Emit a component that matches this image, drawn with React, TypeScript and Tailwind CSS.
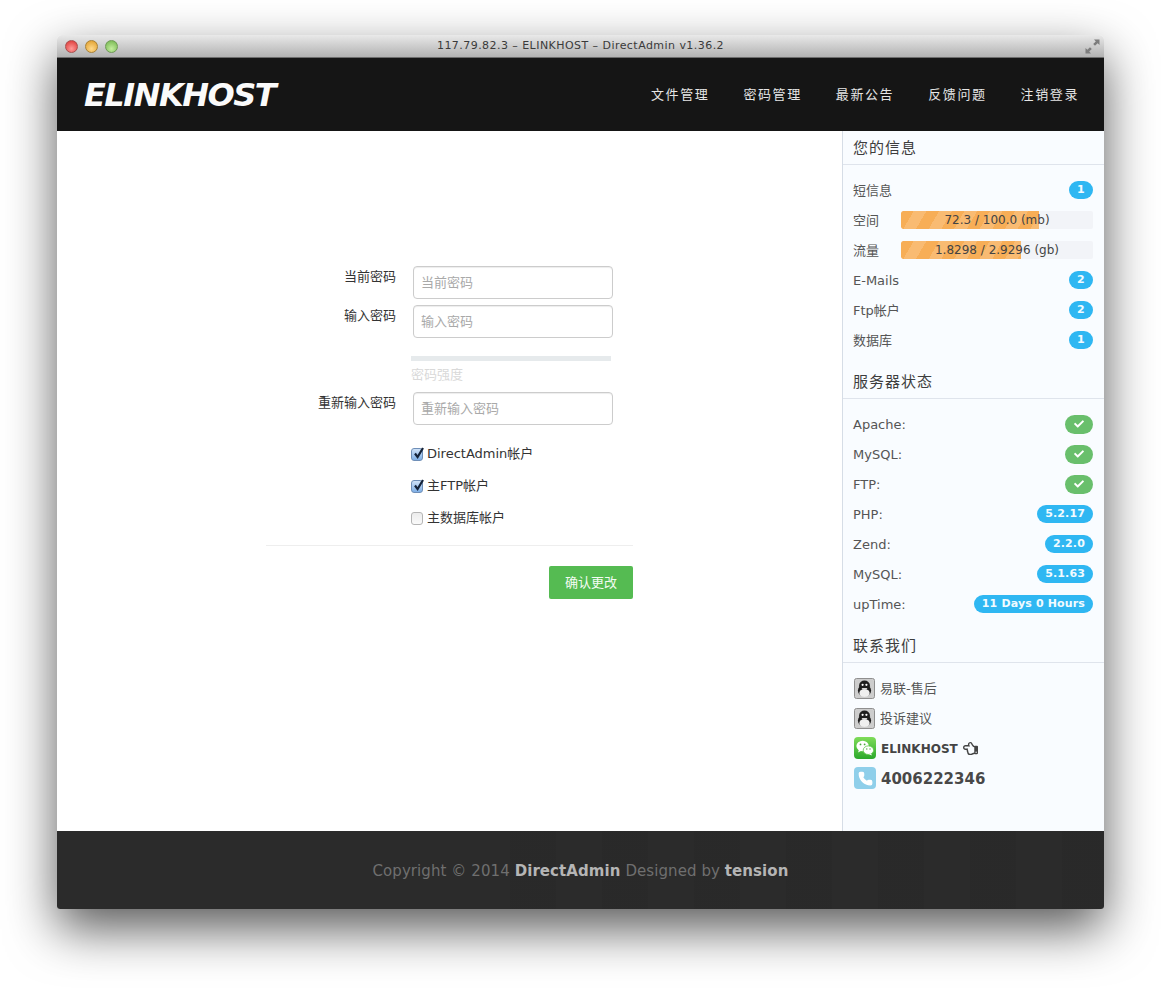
import { FaCheck, FaRegHandPointLeft } from 'react-icons/fa';
import { Phone } from 'lucide-react';

const cjk = "font-['DejaVu_Sans','Noto_Sans_CJK_SC',sans-serif]";

const navItems = ['文件管理', '密码管理', '最新公告', '反馈问题', '注销登录'];

const serverRows = [
  { label: 'Apache:', ok: true },
  { label: 'MySQL:', ok: true },
  { label: 'FTP:', ok: true },
  { label: 'PHP:', value: '5.2.17' },
  { label: 'Zend:', value: '2.2.0' },
  { label: 'MySQL:', value: '5.1.63' },
  { label: 'upTime:', value: '11 Days 0 Hours' },
];

function Badge({ children }: { children: React.ReactNode }) {
  return (
    <span className="flex h-[18px] min-w-6 items-center justify-center rounded-full bg-[#2fb7f2] px-[8px] text-[11px] font-bold tracking-[0.15px] text-[#f2fbff]">
      {children}
    </span>
  );
}

function CheckBadge() {
  return (
    <span className="flex h-[19px] w-7 items-center justify-center rounded-full bg-[#69bf6c] text-white">
      <FaCheck size={10} />
    </span>
  );
}

function Meter({ text, percent }: { text: string; percent: number }) {
  return (
    <div className="relative h-[18px] flex-1 overflow-hidden rounded-[2px] bg-[#f2f4f8]">
      <div
        className="h-full rounded-l-[2px] bg-[repeating-linear-gradient(120deg,#f7ae57_0px,#f7ae57_11px,#f9bb72_11px,#f9bb72_22px)]"
        style={{ width: `${percent}%` }}
      />
      <span className="absolute inset-0 flex items-center justify-center text-[12px] text-[#444]">
        {text}
      </span>
    </div>
  );
}

function Row({ children }: { children: React.ReactNode }) {
  return (
    <div className="flex h-[30px] items-center justify-between [&>span:first-child]:pt-[2px]">
      {children}
    </div>
  );
}

function SectionTitle({ children }: { children: React.ReactNode }) {
  return (
    <h3 className="flex h-[34px] items-center border-b border-[#dfe4ec] pl-[10px] pt-[1px] text-[15px] tracking-[1px] text-[#3d3d3d]">
      {children}
    </h3>
  );
}

function QQIcon() {
  return (
    <svg width="21" height="21" viewBox="0 0 21 21" className="ml-[1px] shrink-0">
      <rect x="0.5" y="0.5" width="20" height="20" rx="2" fill="#cdcdcd" stroke="#8f8f8f" />
      <ellipse cx="10.5" cy="12.5" rx="6.6" ry="6" fill="#1e1e1e" />
      <ellipse cx="10.5" cy="7.5" rx="5.4" ry="5" fill="#1e1e1e" />
      <ellipse cx="10.5" cy="15" rx="5.2" ry="4" fill="#efefef" />
      <circle cx="8.6" cy="6.8" r="1.1" fill="#fff" />
      <circle cx="12.4" cy="6.8" r="1.1" fill="#fff" />
      <path d="M7.5 10h6l-1.2 1.6H8.7z" fill="#d8d8d8" />
    </svg>
  );
}

function WechatIcon() {
  return (
    <svg width="22" height="22" viewBox="0 0 22 22" className="ml-[1px] shrink-0">
      <defs>
        <linearGradient id="wechat" x1="0" y1="0" x2="0" y2="1">
          <stop offset="0" stopColor="#7fdc5a" />
          <stop offset="1" stopColor="#2ba82b" />
        </linearGradient>
      </defs>
      <rect width="22" height="22" rx="4" fill="url(#wechat)" />
      <ellipse cx="8.6" cy="9" rx="6.2" ry="5.2" fill="#fff" />
      <path d="M5 12.5l-1 3 3.4-1.7z" fill="#fff" />
      <ellipse cx="14.4" cy="13.2" rx="5.2" ry="4.3" fill="#fff" stroke="#5cc648" strokeWidth="0.8" />
      <path d="M17 16.5l1 2-3-1.3z" fill="#fff" />
      <circle cx="6.5" cy="7.4" r="0.9" fill="#4aa83a" />
      <circle cx="10.6" cy="7.4" r="0.9" fill="#4aa83a" />
      <circle cx="12.8" cy="12" r="0.7" fill="#4aa83a" />
      <circle cx="16" cy="12" r="0.7" fill="#4aa83a" />
    </svg>
  );
}

function Checkbox({ checked }: { checked?: boolean }) {
  return (
    <span
      className={
        checked
          ? 'relative flex h-[13px] w-[12px] shrink-0 items-center justify-center rounded-[3px] border border-[#6f8fb8] bg-gradient-to-b from-[#cfe2f8] to-[#7fafe6]'
          : 'relative flex h-[13px] w-[12px] shrink-0 items-center justify-center rounded-[3px] border border-[#b5b5b5] bg-gradient-to-b from-[#ececec] to-[#fafafa]'
      }
    >
      {checked && (
        <svg width="14" height="14" viewBox="0 0 14 14" className="absolute -top-[3px] left-0">
          <path d="M3 7.5l2.6 3.6L11 2" fill="none" stroke="#14233a" strokeWidth="2.2" />
        </svg>
      )}
    </span>
  );
}

function Field({ label, className }: { label: string; className?: string }) {
  return (
    <div className={`flex items-start ${className ?? ''}`}>
      <label className="w-[130px] pt-[1px] text-right text-[13px] text-[#333]">{label}</label>
      <input
        placeholder={label}
        className="ml-[17px] h-[33px] w-[200px] rounded-[4px] border border-[#ccc] bg-white px-[7px] text-[13px] shadow-[inset_0_1px_1px_rgba(0,0,0,0.075)] outline-none placeholder:text-[#a9a9a9]"
      />
    </div>
  );
}

function CheckRow({ label, checked }: { label: string; checked?: boolean }) {
  return (
    <div className="flex h-[32px] items-center gap-[4px] pl-[145px] text-[13px] text-[#333]">
      <Checkbox checked={checked} />
      <span>{label}</span>
    </div>
  );
}

export default function App() {
  return (
    <div className={`h-[988px] overflow-hidden bg-white pl-[57px] pt-[35px] ${cjk}`}>
      <div className="w-[1047px] overflow-hidden rounded-t-[5px] rounded-b-[3px] shadow-[0_20px_50px_rgba(0,0,0,0.65)]">
        {/* title bar */}
        <div className="relative flex h-[23px] items-center justify-center border-b border-[#6d6d6d] bg-gradient-to-b from-[#e9e9e9] to-[#b2b2b2] text-[11px] tracking-[0.45px] text-[#3a3a3a]">
          <div className="absolute left-[8px] top-[5px] flex gap-[7px]">
            <span className="h-[13px] w-[13px] rounded-full border border-[#a8504f] bg-[radial-gradient(circle_at_50%_70%,#ff9a98,#d9312f)]" />
            <span className="h-[13px] w-[13px] rounded-full border border-[#a98236] bg-[radial-gradient(circle_at_50%_70%,#ffd98a,#dd9a26)]" />
            <span className="h-[13px] w-[13px] rounded-full border border-[#6f9a56] bg-[radial-gradient(circle_at_50%_70%,#c4ee9e,#6fb24a)]" />
          </div>
          <span>117.79.82.3 – ELINKHOST – DirectAdmin v1.36.2</span>
          <svg width="15" height="15" viewBox="0 0 15 15" className="absolute right-[4px] top-[4px]">
            <path d="M9 0.5h5.5V6L12.6 4.2 10 6.8 8.2 5l2.6-2.6zM6 14.5H0.5V9l1.9 1.8L5 8.2 6.8 10l-2.6 2.6z" fill="#7d7d7d" />
          </svg>
        </div>

        {/* header */}
        <header className="flex h-[73px] items-center justify-between bg-[#151515] pl-[27px] pr-[25px]">
          <span className="text-[32px] font-bold italic leading-none tracking-[-1.5px] text-[#fafafa]">
            ELINKHOST
          </span>
          <nav className="flex gap-[34px] text-[13px] tracking-[1.6px] text-[#e6e6e6]">
            {navItems.map((item) => (
              <span key={item}>{item}</span>
            ))}
          </nav>
        </header>

        <div className="flex h-[700px]">
          {/* form */}
          <main className="w-[785px] bg-white pl-[209px] pt-[135px]">
            <div className="w-[367px]">
              <Field label="当前密码" />
              <Field label="输入密码" className="mt-[6px]" />
              <div className="ml-[145px] mt-[18px] h-[5px] w-[200px] bg-[#e6eaec]" />
              <p className="ml-[145px] mt-[5px] text-[13px] leading-[18px] text-[#d9d9d9]">密码强度</p>
              <Field label="重新输入密码" className="mt-[8px]" />
              <div className="mt-[13px]">
                <CheckRow label="DirectAdmin帐户" checked />
                <CheckRow label="主FTP帐户" checked />
                <CheckRow label="主数据库帐户" />
              </div>
              <div className="mt-[11px] border-t border-[#eeeeee]" />
              <div className="mt-[20px] flex justify-end">
                <button className="h-[33px] w-[84px] rounded-[2px] bg-[#55bb52] text-[13px] text-[#f4fbf3]">
                  确认更改
                </button>
              </div>
            </div>
          </main>

          {/* sidebar */}
          <aside className="w-[262px] border-l border-[#d6dde6] bg-[#f9fcff] text-[13px] text-[#555]">
            <SectionTitle>您的信息</SectionTitle>
            <div className="pb-[10px] pl-[10px] pr-[11px] pt-[10px]">
              <Row>
                <span>短信息</span>
                <Badge>1</Badge>
              </Row>
              <Row>
                <span className="w-[48px]">空间</span>
                <Meter text="72.3 / 100.0 (mb)" percent={72} />
              </Row>
              <Row>
                <span className="w-[48px]">流量</span>
                <Meter text="1.8298 / 2.9296 (gb)" percent={62.5} />
              </Row>
              <Row>
                <span>E-Mails</span>
                <Badge>2</Badge>
              </Row>
              <Row>
                <span>Ftp帐户</span>
                <Badge>2</Badge>
              </Row>
              <Row>
                <span>数据库</span>
                <Badge>1</Badge>
              </Row>
            </div>

            <SectionTitle>服务器状态</SectionTitle>
            <div className="pb-[10px] pl-[10px] pr-[11px] pt-[10px]">
              {serverRows.map((row) => (
                <Row key={row.label + (row.value ?? 'ok')}>
                  <span>{row.label}</span>
                  {row.ok ? <CheckBadge /> : <Badge>{row.value}</Badge>}
                </Row>
              ))}
            </div>

            <SectionTitle>联系我们</SectionTitle>
            <div className="pb-[10px] pl-[10px] pr-[11px] pt-[10px]">
              <div className="flex h-[30px] items-center gap-[5px]">
                <QQIcon />
                <span className="pt-[2px]">易联-售后</span>
              </div>
              <div className="flex h-[30px] items-center gap-[5px]">
                <QQIcon />
                <span className="pt-[2px]">投诉建议</span>
              </div>
              <div className="flex h-[30px] items-center gap-[5px] text-[12px] font-bold text-[#444]">
                <WechatIcon />
                <span className="pt-[2px]">ELINKHOST</span>
                <FaRegHandPointLeft size={15} className="text-[#444]" />
              </div>
              <div className="flex h-[30px] items-center gap-[5px] text-[15px] font-bold text-[#484848]">
                <span className="ml-[1px] flex h-[22px] w-[22px] shrink-0 items-center justify-center rounded-[4px] bg-[#8fcfea]">
                  <Phone size={15} fill="#fff" stroke="#fff" />
                </span>
                <span className="pt-[2px]">4006222346</span>
              </div>
            </div>
          </aside>
        </div>

        {/* footer */}
        <footer className="relative flex h-[78px] items-center justify-center bg-[#2b2b2b] pt-[2px] text-[15px] tracking-[0.08px] text-[#6f6f6f]">
          <div className="absolute inset-y-0 left-[453px] right-0 bg-[repeating-linear-gradient(90deg,rgba(0,0,0,0.04)_0px,rgba(0,0,0,0.04)_46px,transparent_46px,transparent_92px)]" />
          <p className="relative">
            Copyright © 2014 <b className="text-[#b5b5b5]">DirectAdmin</b> Designed by{' '}
            <b className="text-[#b5b5b5]">tension</b>
          </p>
        </footer>
      </div>
    </div>
  );
}
